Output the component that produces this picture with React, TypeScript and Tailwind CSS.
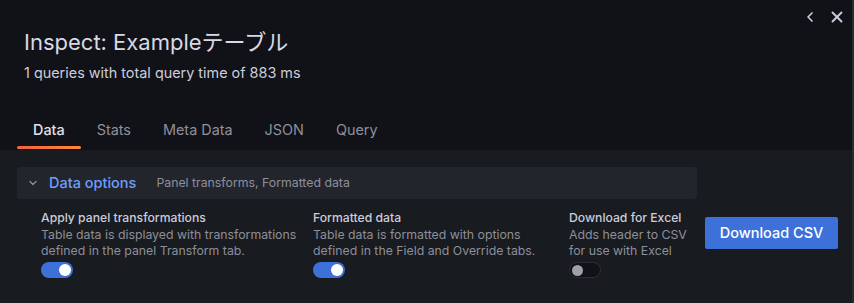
import { ChevronDown, ChevronLeft, X } from 'lucide-react';

const tabs = ['Data', 'Stats', 'Meta Data', 'JSON', 'Query'];

interface OptionProps {
  label: string;
  description: string;
  checked: boolean;
  width: string;
}

function Toggle({ checked }: { checked: boolean }) {
  return (
    <div
      className={
        checked
          ? 'flex h-4 w-8 items-center justify-end rounded-full bg-[#3d71d9] px-[2px]'
          : 'flex h-4 w-8 items-center justify-start rounded-full border border-[#2c2e35] bg-[#111217] px-[2px]'
      }
    >
      <div className={checked ? 'h-3 w-3 rounded-full bg-white' : 'h-[11px] w-[11px] rounded-full bg-[#9fa0aa]'} />
    </div>
  );
}

function Option({ label, description, checked, width }: OptionProps) {
  return (
    <div className={`${width} shrink-0`}>
      <div className="text-[12.2px] font-medium leading-[18px] text-[#ccccdc]">{label}</div>
      <div className="text-[12.3px] leading-4 text-[#8e8f9b]">{description}</div>
      <div className="mt-[3px]">
        <Toggle checked={checked} />
      </div>
    </div>
  );
}

export default function App() {
  return (
    <div className="flex h-[303px] w-[854px] flex-col border-r-2 border-[#2a2b31] bg-[#111217] font-['Inter','Noto_Sans_CJK_JP',sans-serif] text-[#ccccdc]">
      {/* Header */}
      <div className="relative px-6 pt-7">
        <div className="absolute right-[6px] top-[8px] flex items-center gap-[10px] text-[#ccccdc]">
          <ChevronLeft className="h-4 w-4" strokeWidth={2.5} />
          <X className="h-[18px] w-[18px]" strokeWidth={2.5} />
        </div>
        <h1 className="text-[22px] font-normal leading-7 text-[#d8d9e3]">Inspect: Exampleテーブル</h1>
        <p className="mt-[7px] text-[14.4px] leading-5 text-[#ccccdc]">1 queries with total query time of 883 ms</p>
      </div>

      {/* Tabs */}
      <div className="mt-[27px] flex px-[17px]">
        {tabs.map((tab, i) => (
          <div
            key={tab}
            className={
              i === 0
                ? 'relative flex h-10 items-center px-4 text-[14.4px] font-medium text-[#e0e0ea]'
                : 'flex h-10 items-center px-4 text-[14.4px] text-[#8e8f9b]'
            }
          >
            {tab}
            {i === 0 && (
              <div className="absolute bottom-[1px] left-0 right-0 h-[3px] rounded-sm bg-gradient-to-r from-[#f55f3e] to-[#ff8833]" />
            )}
          </div>
        ))}
      </div>

      {/* Content */}
      <div className="flex-1 bg-[#181b1f] px-[17px] pt-[17px]">
        <div className="flex h-8 w-[680px] items-center rounded-[3px] bg-[#22252b] pl-[10px]">
          <ChevronDown className="h-3 w-3 text-[#8e8f9b]" strokeWidth={2.5} />
          <span className="ml-[10px] text-[14.5px] font-medium text-[#6e9fff]">Data options</span>
          <span className="ml-[20px] text-[12.3px] text-[#8e8f9b]">Panel transforms, Formatted data</span>
        </div>

        <div className="mt-[10px] flex items-start gap-4 pl-6">
          <Option
            width="w-[256px]"
            label="Apply panel transformations"
            description="Table data is displayed with transformations defined in the panel Transform tab."
            checked
          />
          <Option
            width="w-[240px]"
            label="Formatted data"
            description="Table data is formatted with options defined in the Field and Override tabs."
            checked
          />
          <Option
            width="w-[120px]"
            label="Download for Excel"
            description="Adds header to CSV for use with Excel"
            checked={false}
          />
          <button className="mt-2 h-8 w-[133px] shrink-0 rounded-[2px] bg-[#3d71d9] text-[14.5px] font-medium text-white">
            Download CSV
          </button>
        </div>
      </div>
    </div>
  );
}
